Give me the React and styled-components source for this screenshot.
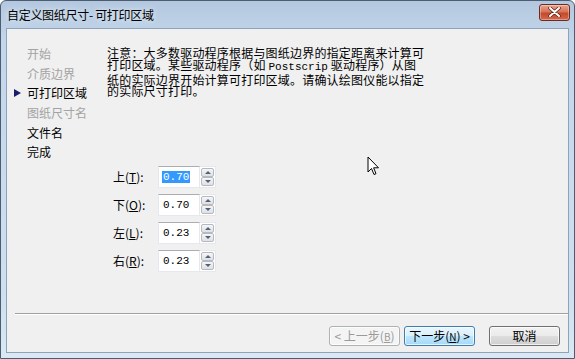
import React from "react";
import styled, { createGlobalStyle } from "styled-components";

const Global = createGlobalStyle`
  html, body { margin: 0; padding: 0; background: #ffffff; }
  body { font-family: "Noto Sans CJK SC", "Liberation Sans", sans-serif; font-size: 12px; color: #000; }
  #root { width: 575px; height: 359px; }
`;

const Window = styled.div`
  position: relative;
  box-sizing: border-box;
  width: 575px;
  height: 359px;
  border: 1px solid #4d5d70;
  border-radius: 6px 6px 0 0;
  background: linear-gradient(to bottom, #b3c8df 0px, #c3d6eb 40px, #cfe0f0 300px, #d9eaf4 100%);
  display: flex;
  flex-direction: column;
  padding: 0 5px 5px 5px;
  overflow: hidden;
`;

const TitleBar = styled.div`
  height: 27px;
  display: flex;
  align-items: center;
  padding: 0 0 0 1px;
  flex: none;
`;

const Title = styled.span`
  font-size: 12px;
  line-height: 14px;
  color: #000;
  text-shadow: 0 0 6px rgba(255,255,255,0.9);
  letter-spacing: -0.3px;
`;

const CloseButton = styled.div`
  margin-left: auto;
  margin-right: -1px;
  margin-top: -5px;
  width: 31px;
  height: 17px;
  box-sizing: border-box;
  border: 1px solid #6e2a1c;
  border-radius: 3px;
  background: linear-gradient(to bottom, #e8a592 0%, #d67357 45%, #c44a2c 55%, #d5684a 100%);
  display: flex;
  align-items: center;
  justify-content: center;
  box-shadow: inset 0 0 0 1px rgba(255,255,255,0.35);
`;

const Client = styled.div`
  flex: 1;
  display: flex;
  flex-direction: column;
  background: #f0f0f0;
  border: 1px solid #8ea3ba;
  min-height: 0;
`;

const Body = styled.div`
  flex: 1;
  display: flex;
  min-height: 0;
`;

const Nav = styled.ul`
  list-style: none;
  margin: 0;
  padding: 15px 0 0 0;
  width: 100px;
  flex: none;
`;

const NavItem = styled.li`
  position: relative;
  height: 19.7px;
  line-height: 19.7px;
  padding-left: 20px;
  font-size: 12px;
  color: ${(p) => (p.$dim ? "#a3a3a3" : "#000")};
`;

const Marker = styled.span`
  position: absolute;
  left: 7px;
  top: 6px;
  width: 0;
  height: 0;
  border-top: 4px solid transparent;
  border-bottom: 4px solid transparent;
  border-left: 7px solid #1c1c6e;
`;

const Main = styled.div`
  flex: 1;
  display: flex;
  flex-direction: column;
  padding-top: 18px;
`;

const Note = styled.p`
  margin: 0;
  font-size: 12px;
  line-height: 11.8px;
  letter-spacing: 0.2px;
  white-space: pre;
`;

const Mono = styled.span`
  font-family: "Liberation Mono", "DejaVu Sans Mono", monospace;
  font-size: 11px;
  letter-spacing: 0;
`;

const Fields = styled.div`
  margin-top: 69px;
  margin-left: 6px;
  display: grid;
  grid-template-columns: 45px auto;
  grid-auto-rows: 22px;
  row-gap: 6px;
  justify-content: start;
  align-items: center;
`;

const Label = styled.label`
  font-size: 12px;
  line-height: 14px;
  u { text-decoration: underline; }
`;

const Spin = styled.div`
  display: flex;
  height: 22px;
`;

const TextBox = styled.div`
  box-sizing: border-box;
  width: 42px;
  height: 22px;
  background: #fff;
  border: 1px solid #e3e9ef;
  border-top-color: #abadb3;
  padding: 3px 0 0 3px;
  font-family: "Liberation Mono", "DejaVu Sans Mono", monospace;
  font-size: 11px;
  line-height: 14px;
  color: #000;
`;

const Value = styled.span`
  padding: 0 1px;
  background: ${(p) => (p.$selected ? "#3399ff" : "transparent")};
  color: ${(p) => (p.$selected ? "#fff" : "#000")};
`;

const Arrows = styled.div`
  box-sizing: border-box;
  width: 16px;
  height: 22px;
  border: 1px solid #e3e9ef;
  border-left: none;
  background: #fff;
  padding: 1px;
  display: flex;
  flex-direction: column;
`;

const ArrowBtn = styled.div`
  flex: 1;
  box-sizing: border-box;
  border: 1px solid #b6b9bf;
  border-radius: 2px;
  background: linear-gradient(to bottom, #f6f6f6, #e0e0e0);
  display: flex;
  align-items: center;
  justify-content: center;
`;

const Tri = styled.span`
  width: 0;
  height: 0;
  border-left: 3px solid transparent;
  border-right: 3px solid transparent;
  ${(p) => (p.$up ? "border-bottom: 3px solid #4d6185;" : "border-top: 3px solid #4d6185;")}
`;

const Separator = styled.div`
  margin-left: 8px;
  height: 1px;
  background: #a0a0a0;
  border-bottom: 1px solid #ffffff;
  flex: none;
`;

const Footer = styled.div`
  flex: none;
  display: flex;
  justify-content: flex-end;
  padding: 11px 8px 6px 0;
`;

const Button = styled.button`
  box-sizing: border-box;
  width: 71px;
  height: 20px;
  margin-left: ${(p) => p.$gap || 0}px;
  padding: 0;
  font-family: "Noto Sans CJK SC", "Liberation Sans", sans-serif;
  font-size: 12px;
  line-height: 16px;
  border-radius: 3px;
  border: 1px solid ${(p) => (p.$variant === "hot" ? "#3c7fb1" : p.$variant === "off" ? "#adb2b5" : "#707070")};
  color: ${(p) => (p.$variant === "off" ? "#9a9a9a" : "#000")};
  background: ${(p) =>
    p.$variant === "hot"
      ? "linear-gradient(to bottom, #eaf6fd 0%, #d9f0fc 50%, #bee6fd 51%, #a7d9f5 100%)"
      : p.$variant === "off"
      ? "#f4f4f4"
      : "linear-gradient(to bottom, #f2f2f2 0%, #ebebeb 50%, #dddddd 51%, #cfcfcf 100%)"};
  box-shadow: inset 0 0 0 1px rgba(255,255,255,0.7);
  white-space: nowrap;
  u { text-decoration: underline; font-size: 10px; }
`;

const Cursor = styled.svg`
  position: absolute;
  left: 366px;
  top: 155px;
`;

const navItems = [
  { t: "开始", dim: true },
  { t: "介质边界", dim: true },
  { t: "可打印区域", current: true },
  { t: "图纸尺寸名", dim: true },
  { t: "文件名" },
  { t: "完成" },
];

const fields = [
  { n: "上", k: "T", v: "0.70", sel: true },
  { n: "下", k: "O", v: "0.70" },
  { n: "左", k: "L", v: "0.23" },
  { n: "右", k: "R", v: "0.23" },
];

export default function App() {
  return (
    <>
      <Global />
      <Window>
        <TitleBar>
          <Title>自定义图纸尺寸- 可打印区域</Title>
          <CloseButton>
            <svg width="13" height="10" viewBox="0 0 13 10">
              <path d="M2 1 L11 9 M11 1 L2 9" stroke="#5a1e12" strokeWidth="3.4" strokeLinecap="round" />
              <path d="M2 1 L11 9 M11 1 L2 9" stroke="#ffffff" strokeWidth="2" strokeLinecap="round" />
            </svg>
          </CloseButton>
        </TitleBar>
        <Client>
          <Body>
            <Nav>
              {navItems.map((it) => (
                <NavItem key={it.t} $dim={it.dim}>
                  {it.current && <Marker />}
                  {it.t}
                </NavItem>
              ))}
            </Nav>
            <Main>
              <Note>
                {"注意：大多数驱动程序根据与图纸边界的指定距离来计算可\n打印区域。某些驱动程序（如 "}
                <Mono>Postscrip</Mono>
                {" 驱动程序）从图\n纸的实际边界开始计算可打印区域。请确认绘图仪能以指定\n的实际尺寸打印。"}
              </Note>
              <Fields>
                {fields.map((f) => (
                  <React.Fragment key={f.k}>
                    <Label>
                      {f.n}(<u>{f.k}</u>):
                    </Label>
                    <Spin>
                      <TextBox>
                        <Value $selected={f.sel}>{f.v}</Value>
                      </TextBox>
                      <Arrows>
                        <ArrowBtn>
                          <Tri $up />
                        </ArrowBtn>
                        <ArrowBtn>
                          <Tri />
                        </ArrowBtn>
                      </Arrows>
                    </Spin>
                  </React.Fragment>
                ))}
              </Fields>
            </Main>
          </Body>
          <Separator />
          <Footer>
            <Button $variant="off">
              &lt; 上一步(<u>B</u>)
            </Button>
            <Button $variant="hot" $gap={4}>
              下一步(<u>N</u>) &gt;
            </Button>
            <Button $gap={14}>取消</Button>
          </Footer>
        </Client>
        <Cursor width="13" height="21" viewBox="0 0 13 21">
          <path
            d="M1 1 L1 16 L4.5 12.5 L7 18.5 L9 17.7 L6.6 11.8 L11.5 11.8 Z"
            fill="#ffffff"
            stroke="#000000"
            strokeWidth="1"
          />
        </Cursor>
      </Window>
    </>
  );
}
